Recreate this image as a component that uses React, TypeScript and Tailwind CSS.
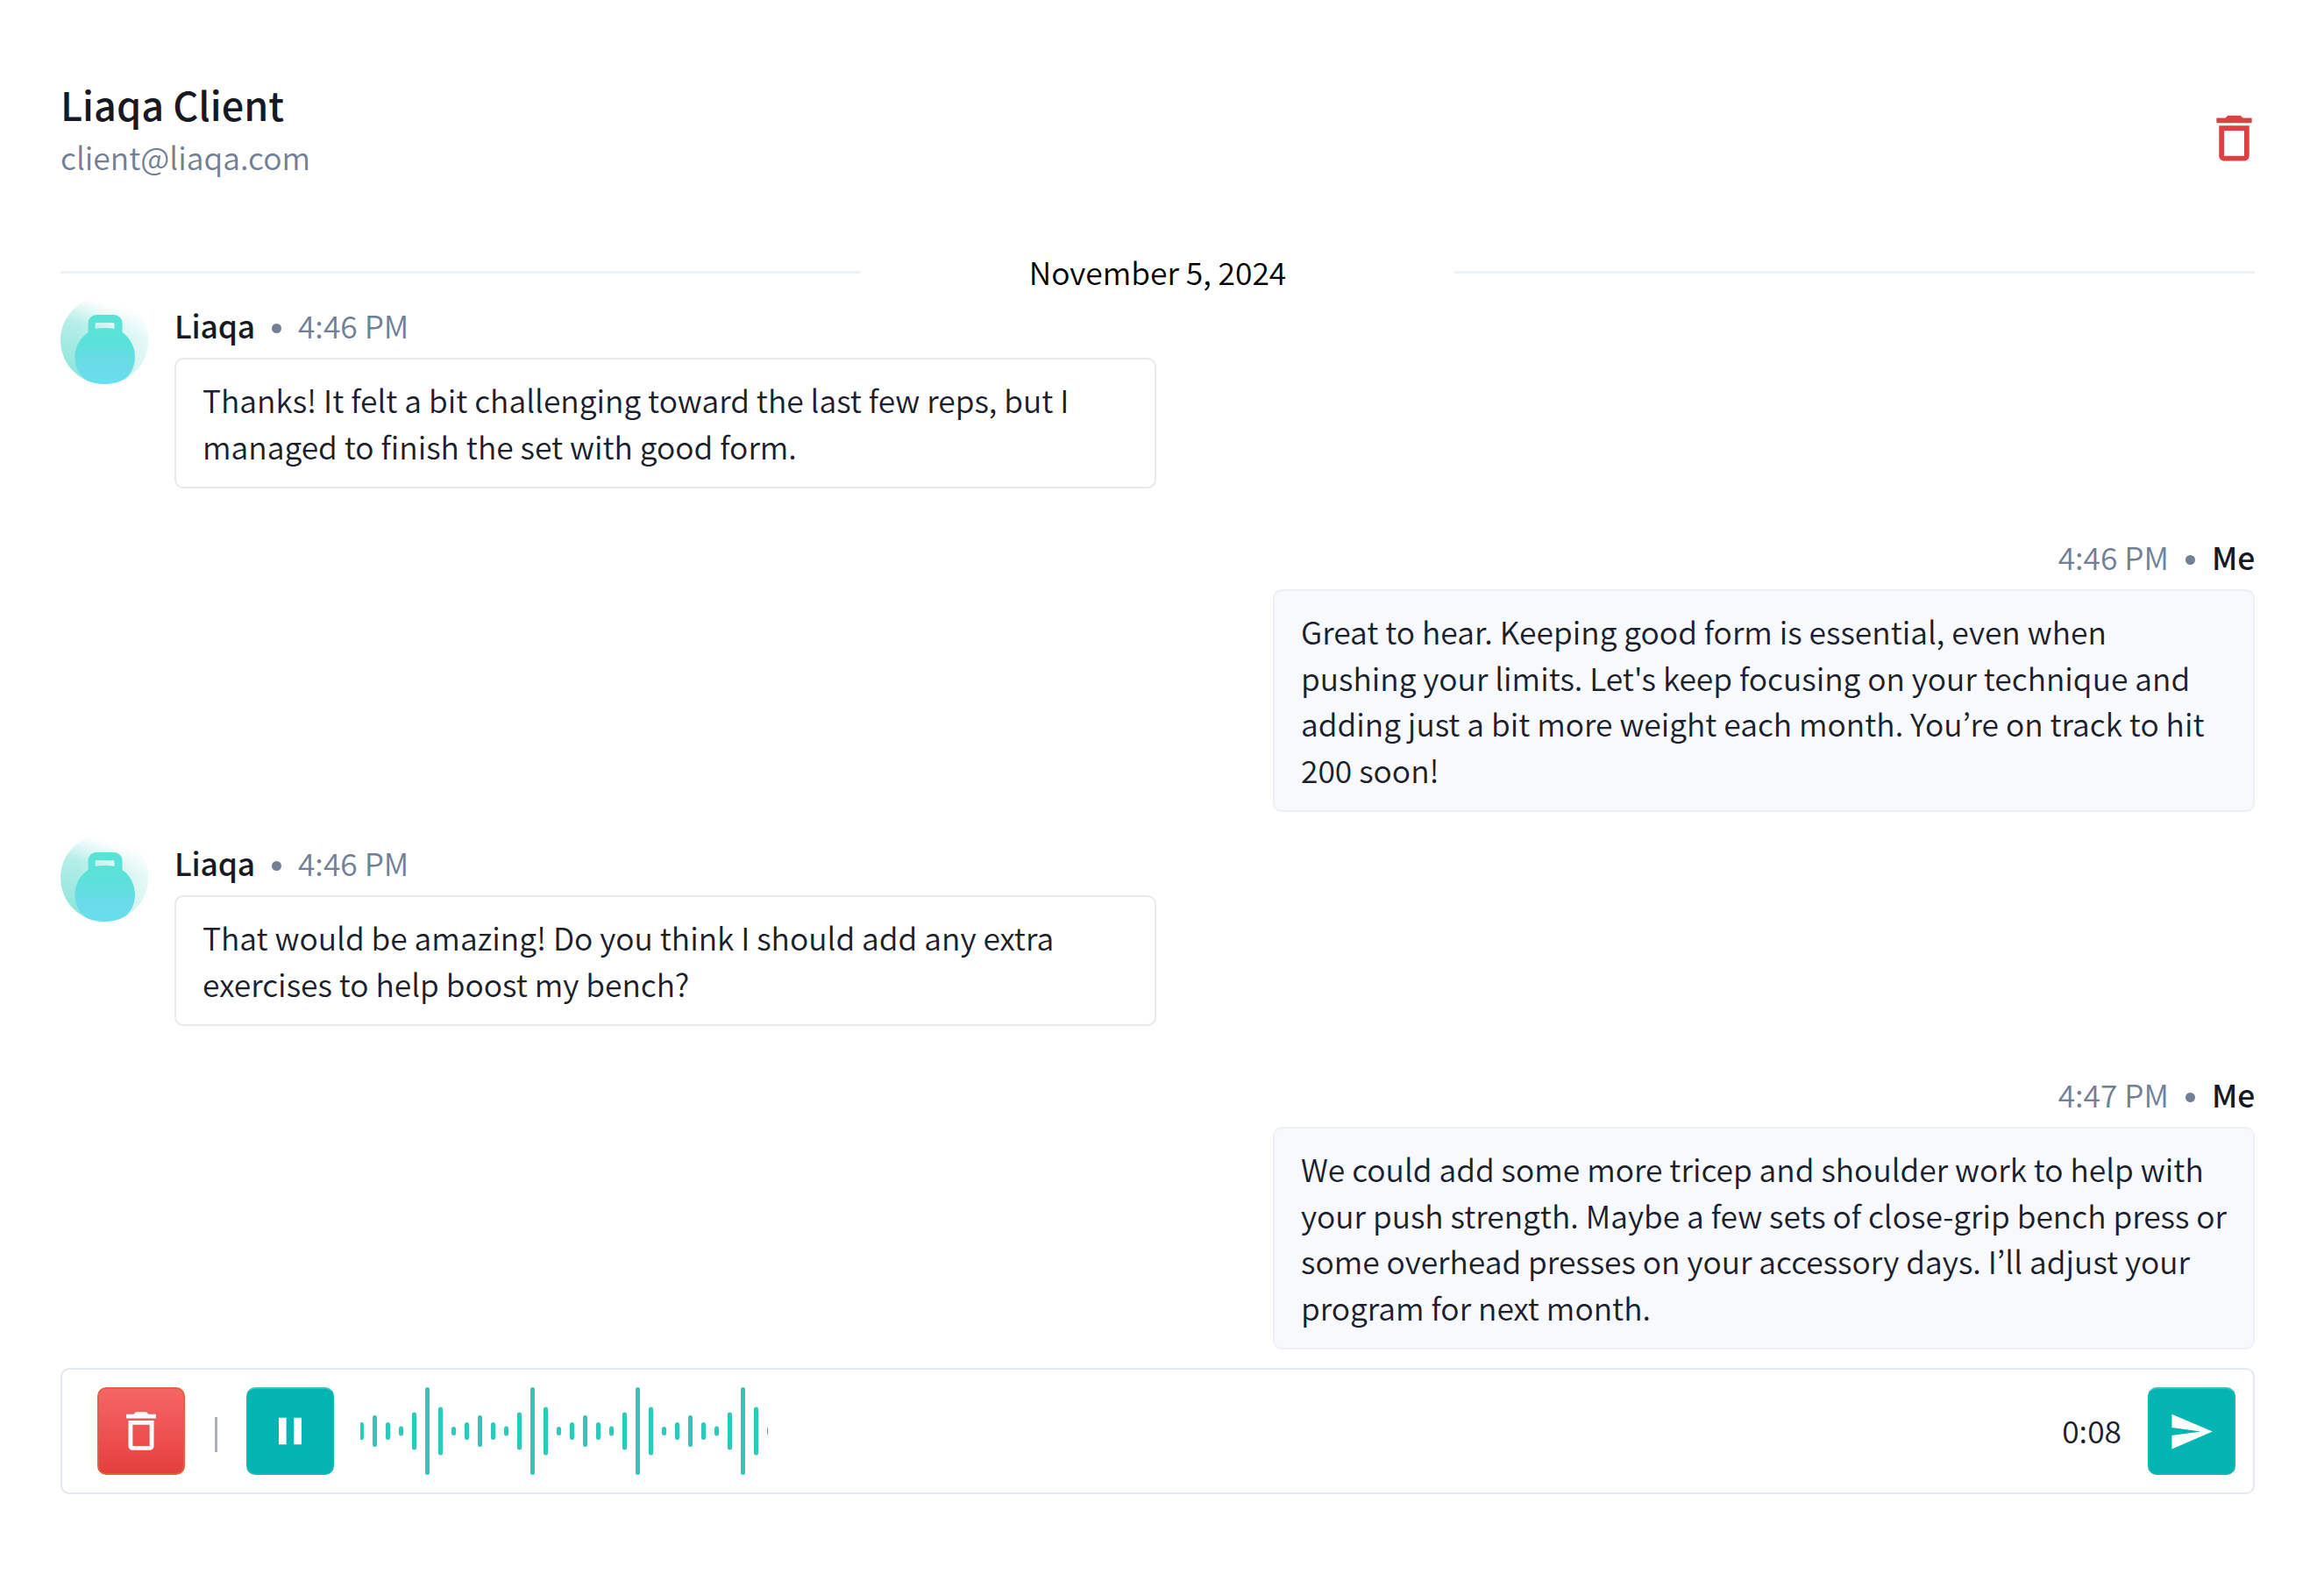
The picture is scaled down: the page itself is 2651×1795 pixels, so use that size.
import { MdDeleteOutline, MdPause, MdSend } from 'react-icons/md';

type Message = {
  id: number;
  mine: boolean;
  author: string;
  time: string;
  text: string;
};

const messages: Message[] = [
  {
    id: 1,
    mine: false,
    author: 'Liaqa',
    time: '4:46 PM',
    text: 'Thanks! It felt a bit challenging toward the last few reps, but I managed to finish the set with good form.',
  },
  {
    id: 2,
    mine: true,
    author: 'Me',
    time: '4:46 PM',
    text: "Great to hear. Keeping good form is essential, even when pushing your limits. Let's keep focusing on your technique and adding just a bit more weight each month. You’re on track to hit 200 soon!",
  },
  {
    id: 3,
    mine: false,
    author: 'Liaqa',
    time: '4:46 PM',
    text: 'That would be amazing! Do you think I should add any extra exercises to help boost my bench?',
  },
  {
    id: 4,
    mine: true,
    author: 'Me',
    time: '4:47 PM',
    text: 'We could add some more tricep and shoulder work to help with your push strength. Maybe a few sets of close-grip bench press or some overhead presses on your accessory days. I’ll adjust your program for next month.',
  },
];

// One period of the wave form, repeated while recording
const pattern = [20, 36, 20, 11, 43, 100, 55, 10];
const bars = Array.from({ length: 32 }, (_, i) => pattern[i % pattern.length]);

function Avatar() {
  return (
    <svg width="100" height="100" viewBox="0 0 100 100" className="shrink-0">
      <defs>
        <linearGradient id="avatar-bg" gradientUnits="userSpaceOnUse" x1="25" y1="90" x2="45" y2="6">
          <stop offset="0" stopColor="#8fe6da" />
          <stop offset="0.65" stopColor="#b5eee8" />
          <stop offset="1" stopColor="#ffffff" />
        </linearGradient>
        <linearGradient id="avatar-fade" x1="0" y1="0" x2="1" y2="0">
          <stop offset="0.2" stopColor="#fff" stopOpacity="0" />
          <stop offset="1" stopColor="#fff" stopOpacity="0.68" />
        </linearGradient>
        <linearGradient id="kettlebell" x1="0" y1="0" x2="0" y2="1">
          <stop offset="0" stopColor="#58e3d6" />
          <stop offset="0.4" stopColor="#5ce1da" />
          <stop offset="0.75" stopColor="#6cdaea" />
          <stop offset="1" stopColor="#66e0f0" />
        </linearGradient>
        <clipPath id="avatar-clip">
          <circle cx="50" cy="50" r="50" />
        </clipPath>
      </defs>
      <g clipPath="url(#avatar-clip)">
        <rect width="100" height="100" fill="url(#avatar-bg)" />
        <rect width="100" height="100" fill="url(#avatar-fade)" />
        <path
          fill="url(#kettlebell)"
          fillRule="evenodd"
          d="M41 21h20a9.500 9.500 0 0 1 9.500 9.500v10.500A34.300 34.300 0 0 1 85 69.500C85 88 70 103 50.700 103S16.300 88 16.300 69.500A34.300 34.300 0 0 1 31.500 41V30.500A9.500 9.500 0 0 1 41 21zM41 30a1.500 1.500 0 0 0-1.500 1.500V37Q50.500 35 61.500 37V31.500A1.500 1.500 0 0 0 60 30z"
        />
      </g>
    </svg>
  );
}

function Meta({ message }: { message: Message }) {
  return (
    <div className={`flex h-[50px] items-center leading-[50px] ${message.mine ? 'flex-row-reverse' : ''}`}>
      <span className="font-medium tracking-[-0.2px] text-[#171923]">{message.author}</span>
      <span className="mx-[19px] mt-[7px] size-[11px] rounded-full bg-[#718096]" />
      <span className="text-[#718096]">{message.time}</span>
    </div>
  );
}

function Row({ message }: { message: Message }) {
  if (message.mine) {
    return (
      <div className="flex flex-col items-end pt-[53px] pb-[25px]">
        <Meta message={message} />
        <div className="mt-[12px] w-[1120px] rounded-[10px] border-2 border-[#edf0f6] bg-[#f7f9fd] px-[30px] py-[20px] leading-[52.5px] text-[#1a202c]">
          {message.text}
        </div>
      </div>
    );
  }

  return (
    <div className="flex items-start">
      <Avatar />
      <div className="ml-[30px] pt-[8px]">
        <Meta message={message} />
        <div className="mt-[12px] w-[1120px] rounded-[10px] border-2 border-[#e8e9eb] px-[30px] py-[20px] leading-[52.5px] text-[#1a202c]">
          {message.text}
        </div>
      </div>
    </div>
  );
}

function Waveform() {
  return (
    <svg width="465" height="100" viewBox="0 0 465 100" className="ml-[30px]">
      {bars.map((h, i) => (
        <rect key={i} x={i * 15 - 1} y={50 - h / 2} width="5" height={h} rx="2.5" fill="#2ccaba" />
      ))}
    </svg>
  );
}

export default function App() {
  return (
    <main className="h-[1795px] w-[2651px] overflow-hidden bg-white pl-[69px] pr-[79px] font-['Noto_Sans_CJK_KR','Noto_Sans_CJK_SC',sans-serif] text-[35.4px] font-[350]">
      <header className="flex items-start justify-between pt-[89px]">
        <div>
          <h1 className="text-[45px] leading-[60px] font-medium text-[#171923]">Liaqa Client</h1>
          <p className="mt-[5px] leading-[50px] text-[#718096]">client@liaqa.com</p>
        </div>
        <button className="-mr-[11px] mt-[34px]">
          <MdDeleteOutline className="size-[69px] text-[#dd4040]" />
        </button>
      </header>

      <div className="mt-[80px] mb-[1px] flex h-[53px] items-center">
        <div className="h-[3px] w-[913px] bg-[#edf2f7]" />
        <div className="-mt-[3px] flex-1 text-center leading-[53px] text-black">November 5, 2024</div>
        <div className="h-[3px] w-[913px] bg-[#edf2f7]" />
      </div>

      <section>
        {messages.map((message) => (
          <Row key={message.id} message={message} />
        ))}
      </section>

      <footer className="-mt-[4px] flex h-[144px] items-center rounded-[10px] border-2 border-[#e2e8f0] pl-[40px] pr-[20px]">
        <button className="flex size-[100px] items-center justify-center rounded-[10px] border-2 border-[#d9663f] bg-linear-to-b from-[#f56565] to-[#e53e3e] text-white">
          <MdDeleteOutline className="size-[58px]" />
        </button>
        <div className="ml-[34px] mt-[8px] h-[40px] w-[3px] bg-[#a9b0c8]" />
        <button className="ml-[33px] flex size-[100px] items-center justify-center rounded-[10px] border-2 border-[#14b8b0] border-t-[#3dc4ba] bg-[#02b5b2] text-white">
          <MdPause className="size-[52px]" />
        </button>
        <Waveform />
        <span className="ml-auto mr-[30px] -mt-[3px] leading-[50px] text-[#1a202c]">0:08</span>
        <button className="flex size-[100px] items-center justify-center rounded-[10px] border-2 border-[#14b8b0] border-t-[#3dc4ba] bg-[#02b5b2] text-white">
          <MdSend className="mr-[2px] size-[53px]" />
        </button>
      </footer>
    </main>
  );
}
